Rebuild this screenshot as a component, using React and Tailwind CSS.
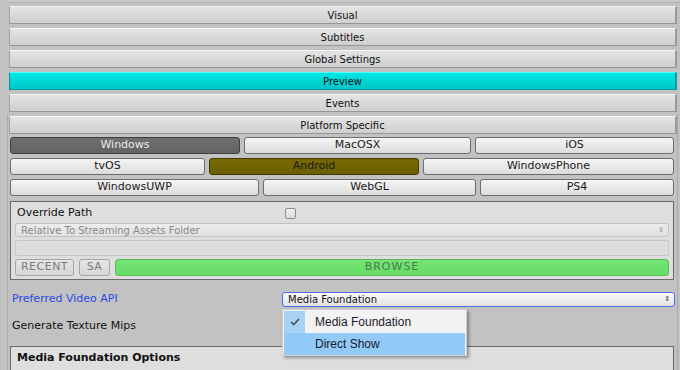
import React from 'react';

const tabs = ['Visual', 'Subtitles', 'Global Settings', 'Preview', 'Events'];

const Tab = ({ label, active }) => (
    <div
        className={
            active
                ? 'h-[18px] flex items-center justify-center text-[10px] text-[#111] bg-gradient-to-b from-[#00e8e8] to-[#00c4c4] border-t border-t-[#5ff] border-b border-b-[#00a0a0] border-l border-l-[#009a9a] border-r-2 border-r-[#00a4a4]'
                : 'h-[18px] flex items-center justify-center text-[10px] text-[#111] bg-gradient-to-b from-[#e4e4e4] to-[#cfcfcf] border-t border-t-[#f4f4f4] border-b border-b-[#979797] border-l border-l-[#a2a2a2] border-r-2 border-r-[#9a9a9a]'
        }
    >
        {label}
    </div>
);

const PlatformButton = ({ label, className, variant }) => {
    let look = 'bg-gradient-to-b from-[#f6f6f6] to-[#dcdcdc] border-[#6c6c6c] text-[#1a1a1a]';
    if (variant === 'dark') look = 'bg-gradient-to-b from-[#6e6e6e] to-[#646464] border-[#3e3e3e] text-[#ececec]';
    if (variant === 'olive') look = 'bg-gradient-to-b from-[#786a00] to-[#6a5d00] border-[#433b00] text-[#1a1a1a]';
    return (
        <div className={`h-[17px] shrink-0 rounded-[3px] border flex items-center justify-center text-[11px] ${look} ${className}`}>
            {label}
        </div>
    );
};

export default function App() {
    return (
        <div className="relative w-[680px] h-[370px] overflow-hidden bg-[#c2c2c2] font-['DejaVu_Sans',sans-serif]">
            {/* edge of the panel above */}
            <div className="h-[3px] ml-[7px] bg-[#c8c8c8] border-b border-[#b2b2b2]" />

            {/* section tabs */}
            <div className="mt-[3px] ml-[9px] w-[668px] flex flex-col gap-[4px]">
                {tabs.map((t) => (
                    <Tab key={t} label={t} active={t === 'Preview'} />
                ))}
            </div>

            {/* platform specific */}
            <div className="mt-[2px] ml-[7px] w-[671px] h-[260px] border-l border-r border-[#ababab] pt-[2px]">
                <div className="ml-[1px] w-[668px]">
                    <Tab label="Platform Specific" />
                </div>

                <div className="mt-[3px] ml-[2px] flex flex-col gap-[4px]">
                    <div className="flex">
                        <PlatformButton label="Windows" variant="dark" className="w-[230px]" />
                        <PlatformButton label="MacOSX" className="ml-[4px] w-[227px]" />
                        <PlatformButton label="iOS" className="ml-[4px] w-[199px]" />
                    </div>
                    <div className="flex">
                        <PlatformButton label="tvOS" className="w-[195px]" />
                        <PlatformButton label="Android" variant="olive" className="ml-[4px] w-[210px]" />
                        <PlatformButton label="WindowsPhone" className="ml-[4px] w-[251px]" />
                    </div>
                    <div className="flex">
                        <PlatformButton label="WindowsUWP" className="w-[249px]" />
                        <PlatformButton label="WebGL" className="ml-[4px] w-[213px]" />
                        <PlatformButton label="PS4" className="ml-[4px] w-[194px]" />
                    </div>
                </div>

                {/* path box */}
                <div className="mt-[5px] ml-[2px] w-[664px] h-[79px] border border-[#6a6a6a] bg-[#dedede] px-[4px]">
                    <div className="mt-[5px] h-[12px] flex items-center">
                        <span className="w-[270px] pl-[2px] text-[11px] text-[#111]">Override Path</span>
                        <span className="w-[11px] h-[11px] rounded-[2px] border border-[#8c8c8c] bg-gradient-to-b from-[#f2f2f2] to-[#dadada]" />
                    </div>
                    <div className="mt-[4px] h-[14px] rounded-[3px] border border-[#c2c2c2] bg-gradient-to-b from-[#ececec] to-[#e0e0e0] flex items-center justify-between pl-[5px] pr-[4px]">
                        <span className="text-[10px] text-[#8a8a8a]">Relative To Streaming Assets Folder</span>
                        <span className="text-[7px] leading-none text-[#999]">⇕</span>
                    </div>
                    <div className="mt-[3px] h-[16px] rounded-[2px] border border-[#c6c6c6] bg-[#dcdcdc]" />
                    <div className="mt-[3px] h-[17px] flex">
                        <div className="w-[59px] rounded-[3px] border border-[#a6a6a6] bg-gradient-to-b from-[#e6e6e6] to-[#d6d6d6] flex items-center justify-center text-[11px] tracking-[0.5px] text-[#7a7a7a]">RECENT</div>
                        <div className="ml-[5px] w-[31px] rounded-[3px] border border-[#a6a6a6] bg-gradient-to-b from-[#e6e6e6] to-[#d6d6d6] flex items-center justify-center text-[11px] tracking-[0.5px] text-[#7a7a7a]">SA</div>
                        <div className="ml-[5px] flex-1 rounded-[3px] border border-[#5cb85c] bg-gradient-to-b from-[#74e474] to-[#66dc66] flex items-center justify-center text-[11px] tracking-[1px] text-[#4a7a4a]">BROWSE</div>
                    </div>
                </div>

                {/* video api */}
                <div className="mt-[12px] h-[15px] flex items-center">
                    <span className="w-[274px] pl-[4px] text-[11px] text-[#2848e8]">Preferred Video API</span>
                    <div className="w-[393px] h-[15px] rounded-[3px] border border-[#4a6ee6] bg-gradient-to-b from-[#fafafa] to-[#e2e2e2] flex items-center justify-between pl-[5px] pr-[4px]">
                        <span className="text-[10px] text-[#111]">Media Foundation</span>
                        <span className="text-[7px] leading-none text-[#333]">⇕</span>
                    </div>
                </div>

                <div className="mt-[12px] h-[14px] flex items-center pl-[4px] text-[11px] text-[#111]">Generate Texture Mips</div>

                <div className="mt-[13px] ml-[2px] w-[664px] h-[40px] border border-[#6a6a6a] bg-[#dedede] pl-[6px] pt-[4px]">
                    <div className="h-[14px] flex items-center text-[11px] font-bold text-[#111]">Media Foundation Options</div>
                </div>
            </div>

            {/* open dropdown menu */}
            <div className="absolute left-[282px] top-[309px] w-[185px] h-[47px] bg-[#f0f0f0] border border-[#cfcfcf] shadow-[2px_2px_3px_rgba(0,0,0,0.35)] p-[1px] font-['Liberation_Sans',sans-serif]">
                <div className="h-[22px] flex bg-[#f2f2f2]">
                    <div className="w-[21px] bg-[#a8d2f4] flex items-center justify-center">
                        <svg width="10" height="8" viewBox="0 0 10 8">
                            <path d="M1 4 L3.8 6.6 L9 1" fill="none" stroke="#454545" strokeWidth="1.4" />
                        </svg>
                    </div>
                    <span className="pl-[10px] flex items-center text-[12px] text-[#1b1b2b]">Media Foundation</span>
                </div>
                <div className="h-[22px] flex items-center bg-[#91c9f7] pl-[31px] text-[12px] text-[#1b1b2b]">Direct Show</div>
            </div>
        </div>
    );
}
